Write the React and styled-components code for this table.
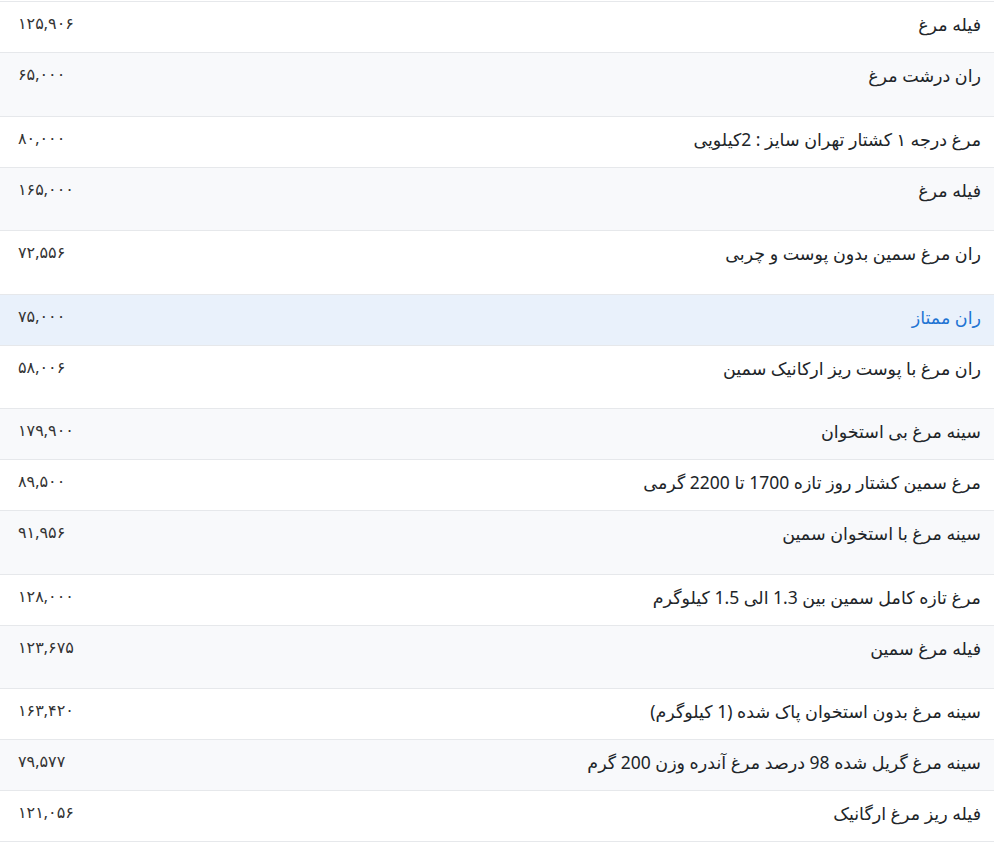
import styled, { createGlobalStyle } from 'styled-components'

const GlobalStyle = createGlobalStyle`
  body {
    margin: 0;
    background: #fff;
    font-family: "Noto Sans", "DejaVu Sans", sans-serif;
  }
`;

const PriceTable = styled.table`
  width: 100%;
  margin-top: 1px;
  border-collapse: collapse;
  direction: rtl;
  color: #212529;
  border-top: 1px solid #e6e8eb;
`;

const Row = styled.tr`
  background: ${p => (p.$active ? '#e9f1fb' : p.$striped ? '#f8f9fb' : '#fff')};
  border-bottom: 1px solid #e6e8eb;
`;

const NameCell = styled.td`
  padding: 9px 13px ${p => (p.$tall ? '27.5px' : '15px')} 12px;
  font-size: 17.5px;
  line-height: 26px;
  text-align: right;
  vertical-align: top;
  color: ${p => (p.$active ? '#2174d3' : '#212529')};
  white-space: nowrap;
`;

const PriceCell = styled.td`
  padding: 8px 12px 16px 18px;
  font-size: 16px;
  line-height: 26px;
  text-align: left;
  vertical-align: top;
  width: 140px;
  color: #333;
`;

const items = [
  { name: 'فیله مرغ', price: '۱۲۵,۹۰۶' },
  { name: 'ران درشت مرغ', price: '۶۵,۰۰۰', tall: true },
  { name: 'مرغ درجه ۱ کشتار تهران سایز : 2کیلویی', price: '۸۰,۰۰۰' },
  { name: 'فیله مرغ', price: '۱۶۵,۰۰۰', tall: true },
  { name: 'ران مرغ سمین بدون پوست و چربی', price: '۷۲,۵۵۶', tall: true },
  { name: 'ران ممتاز', price: '۷۵,۰۰۰', active: true },
  { name: 'ران مرغ با پوست ریز ارکانیک سمین', price: '۵۸,۰۰۶', tall: true },
  { name: 'سینه مرغ بی استخوان', price: '۱۷۹,۹۰۰' },
  { name: 'مرغ سمین کشتار روز تازه 1700 تا 2200 گرمی', price: '۸۹,۵۰۰' },
  { name: 'سینه مرغ با استخوان سمین', price: '۹۱,۹۵۶', tall: true },
  { name: 'مرغ تازه کامل سمین بین 1.3 الی 1.5 کیلوگرم', price: '۱۲۸,۰۰۰' },
  { name: 'فیله مرغ سمین', price: '۱۲۳,۶۷۵', tall: true },
  { name: 'سینه مرغ بدون استخوان پاک شده (1 کیلوگرم)', price: '۱۶۳,۴۲۰' },
  { name: 'سینه مرغ گریل شده 98 درصد مرغ آندره وزن 200 گرم', price: '۷۹,۵۷۷' },
  { name: 'فیله ریز مرغ ارگانیک', price: '۱۲۱,۰۵۶' },
];

const App = () => (
  <>
    <GlobalStyle />
    <PriceTable>
      <tbody>
        {items.map((it, i) => (
          <Row key={i} $striped={i % 2 === 1} $active={it.active}>
            <NameCell $tall={it.tall} $active={it.active}>{it.name}</NameCell>
            <PriceCell>{it.price}</PriceCell>
          </Row>
        ))}
      </tbody>
    </PriceTable>
  </>
)

export default App
